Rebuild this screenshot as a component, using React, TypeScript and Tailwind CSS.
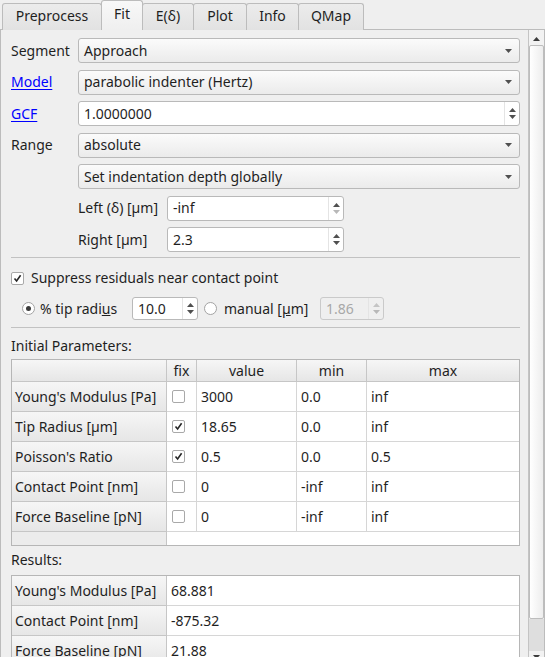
import React from 'react';

const Down = ({ c = '#505050' }: { c?: string }) => (
  <svg width="7" height="4" viewBox="0 0 7 4">
    <path d="M0 0h7L3.5 4z" fill={c} />
  </svg>
);

const Up = ({ c = '#505050' }: { c?: string }) => (
  <svg width="7" height="4" viewBox="0 0 7 4">
    <path d="M0 4h7L3.5 0z" fill={c} />
  </svg>
);

const Combo = ({ text }: { text: string }) => (
  <div className="flex h-[25px] flex-1 items-center justify-between rounded-[3px] border border-[#b9b9b9] bg-linear-to-b from-[#fbfbfb] to-[#ebebeb] pl-[5px] pr-[7px]">
    <span>{text}</span>
    <Down />
  </div>
);

const Spin = ({
  text,
  className = '',
  disabled = false,
  downOff = false,
}: {
  text: string;
  className?: string;
  disabled?: boolean;
  downOff?: boolean;
}) => (
  <div
    className={`flex items-stretch rounded-[3px] border ${
      disabled ? 'border-[#cacaca] bg-[#efefef] text-[#a8a8a8]' : 'border-[#b9b9b9] bg-white'
    } ${className}`}
  >
    <span className="flex flex-1 items-center pl-[5px]">{text}</span>
    <div className="flex w-[15px] flex-col items-center justify-center gap-[3px] border-l border-[#e4e4e4]">
      <Up c={disabled ? '#c4c4c4' : '#505050'} />
      <Down c={disabled || downOff ? '#b8b8b8' : '#505050'} />
    </div>
  </div>
);

const Check = ({ on }: { on: boolean }) => (
  <div className="flex h-[13px] w-[13px] shrink-0 items-center justify-center rounded-[2px] border border-[#a9a9a9] bg-white">
    {on && (
      <svg width="9" height="9" viewBox="0 0 9 9">
        <path d="M1.5 4.5L3.6 7L7.6 1.2" stroke="#262626" strokeWidth="1.6" fill="none" />
      </svg>
    )}
  </div>
);

const Radio = ({ on }: { on: boolean }) => (
  <div className="flex h-[13px] w-[13px] shrink-0 items-center justify-center rounded-full border border-[#a3a3a3] bg-white">
    {on && <div className="h-[5px] w-[5px] rounded-full bg-[#3a3a3a]" />}
  </div>
);

const Row = ({ label, children }: { label: React.ReactNode; children: React.ReactNode }) => (
  <div className="flex h-[25px] items-center">
    <div className="w-[67px] shrink-0">{label}</div>
    {children}
  </div>
);

const Link = ({ children }: { children: React.ReactNode }) => (
  <span className="text-[#0000ff] underline underline-offset-2">{children}</span>
);

const params = [
  { name: "Young's Modulus [Pa]", fix: false, value: '3000', min: '0.0', max: 'inf' },
  { name: 'Tip Radius [µm]', fix: true, value: '18.65', min: '0.0', max: 'inf' },
  { name: "Poisson's Ratio", fix: true, value: '0.5', min: '0.0', max: '0.5' },
  { name: 'Contact Point [nm]', fix: false, value: '0', min: '-inf', max: 'inf' },
  { name: 'Force Baseline [pN]', fix: false, value: '0', min: '-inf', max: 'inf' },
];

const results = [
  { name: "Young's Modulus [Pa]", value: '68.881' },
  { name: 'Contact Point [nm]', value: '-875.32' },
  { name: 'Force Baseline [pN]', value: '21.88' },
];

const vhead =
  'flex items-center pl-[3px] bg-linear-to-b from-[#f6f6f6] to-[#e6e6e6] border-r border-b border-[#c6c6c6]';
const hhead =
  'flex items-center justify-center bg-linear-to-b from-[#f6f6f6] to-[#e6e6e6] border-r border-b border-[#c6c6c6]';
const cell = 'flex items-center pl-[4px] bg-white border-r border-b border-[#d6d6d6]';

const tabs = [
  { t: 'Preprocess', w: 'w-[100px]' },
  { t: 'Fit', w: 'w-[42px]', on: true },
  { t: 'E(δ)', w: 'w-[52px]' },
  { t: 'Plot', w: 'w-[54px]' },
  { t: 'Info', w: 'w-[53px]' },
  { t: 'QMap', w: 'w-[66px]' },
];

export default function App() {
  return (
    <div className="flex h-[657px] w-[545px] flex-col overflow-hidden bg-[#efefef] font-['Noto_Sans','DejaVu_Sans',sans-serif] text-[14px] leading-[18px] text-[#1f1f1f]">
      {/* tab bar */}
      <div className="relative z-10 flex h-[30px] items-end pl-[2px]">
        {tabs.map((tab, i) => (
          <div
            key={tab.t}
            className={`${tab.w} ${i > 0 ? '-ml-px' : ''} flex items-center justify-center rounded-t-[3px] border border-b-0 border-[#bcbcbc] ${
              tab.on
                ? 'relative h-[30px] bg-linear-to-b from-[#f8f8f8] to-[#efefef] pb-[3px]'
                : 'h-[27px] bg-linear-to-b from-[#ececec] to-[#e2e2e2] pb-[2px]'
            }`}
          >
            {tab.t}
          </div>
        ))}
      </div>

      {/* pane */}
      <div className="-mt-px flex flex-1 border border-[#bcbcbc]">
        <div className="flex flex-1 flex-col overflow-hidden pl-[10px] pr-[8px] pt-[8px]">
          <div className="flex flex-col gap-[6.5px]">
            <Row label="Segment">
              <Combo text="Approach" />
            </Row>
            <Row label={<Link>Model</Link>}>
              <Combo text="parabolic indenter (Hertz)" />
            </Row>
            <Row label={<Link>GCF</Link>}>
              <Spin text="1.0000000" className="h-[25px] flex-1" />
            </Row>
            <Row label="Range">
              <Combo text="absolute" />
            </Row>
            <Row label="">
              <Combo text="Set indentation depth globally" />
            </Row>
            <Row label="">
              <div className="w-[89px] shrink-0">Left (δ) [µm]</div>
              <Spin text="-inf" className="h-[25px] w-[177px]" downOff />
            </Row>
            <Row label="">
              <div className="w-[89px] shrink-0">Right [µm]</div>
              <Spin text="2.3" className="h-[25px] w-[177px]" />
            </Row>
          </div>

          <div className="mt-[5px] h-px bg-[#c2c2c2]" />

          <div className="mt-[10px] flex h-[20px] items-center gap-[7px]">
            <Check on />
            <span>Suppress residuals near contact point</span>
          </div>

          <div className="mt-[9px] flex h-[23px] items-center pl-[11px]">
            <Radio on />
            <span className="ml-[5px] w-[92px]">
              % tip radi<span className="underline">u</span>s
            </span>
            <Spin text="10.0" className="h-[23px] w-[66px]" />
            <div className="ml-[6px]">
              <Radio on={false} />
            </div>
            <span className="ml-[7px] w-[96px]">
              manual [<span className="underline">µ</span>m]
            </span>
            <Spin text="1.86" className="h-[23px] w-[64px]" disabled />
          </div>

          <div className="mt-[7px] h-px bg-[#c2c2c2]" />

          <div className="mt-[9px] flex h-[18px] items-center">Initial Parameters:</div>

          {/* parameters table */}
          <div className="mt-[4px] grid grid-cols-[155px_30px_100px_70px_1fr] grid-rows-[22px_repeat(5,30px)_13px] border border-[#b6b6b6] bg-white">
            <div className={hhead} />
            <div className={hhead}>fix</div>
            <div className={hhead}>value</div>
            <div className={hhead}>min</div>
            <div className={`${hhead} border-r-0`}>max</div>
            {params.map((p) => (
              <React.Fragment key={p.name}>
                <div className={vhead}>{p.name}</div>
                <div className={`${cell} pl-[5px]`}>
                  <Check on={p.fix} />
                </div>
                <div className={cell}>{p.value}</div>
                <div className={cell}>{p.min}</div>
                <div className={`${cell} border-r-0`}>{p.max}</div>
              </React.Fragment>
            ))}
            <div className="border-r border-[#c6c6c6] bg-[#ececec]" />
            <div className="col-span-4 bg-white" />
          </div>

          <div className="mt-[5px] flex h-[18px] items-center">Results:</div>

          {/* results table */}
          <div className="mt-[6px] grid grid-cols-[155px_1fr] auto-rows-[30px] border border-[#b6b6b6] bg-white">
            {results.map((r) => (
              <React.Fragment key={r.name}>
                <div className={vhead}>{r.name}</div>
                <div className={`${cell} border-r-0`}>{r.value}</div>
              </React.Fragment>
            ))}
          </div>
        </div>

        {/* scrollbar */}
        <div className="flex w-[16px] flex-col border-l border-[#c4c4c4] bg-[#f2f2f2] pt-[2px]">
          <div className="flex h-[13px] items-center justify-center">
            <Up c="#3c3c3c" />
          </div>
          <div className="flex-1 rounded-[2px] border border-[#bdbdbd] bg-linear-to-r from-[#ffffff] to-[#ededed]" />
          <div className="h-[32px] bg-[#dedede]" />
          <div className="flex h-[16px] items-start justify-center pt-[4px]">
            <Down c="#3c3c3c" />
          </div>
        </div>
      </div>
    </div>
  );
}
